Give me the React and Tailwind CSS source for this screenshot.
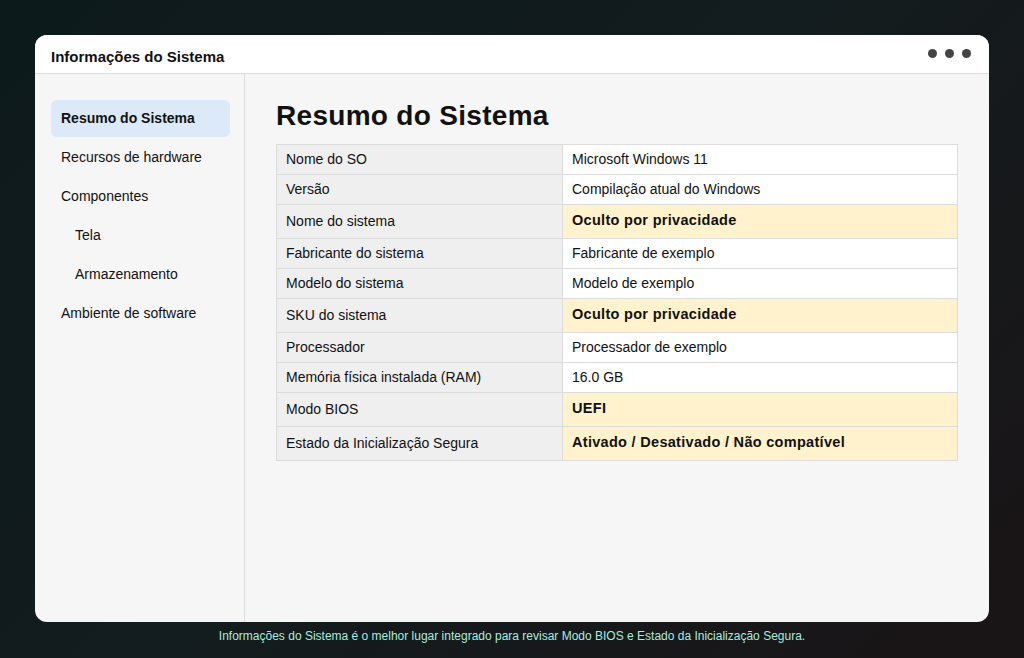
export default function App() {
  const rows = [
    ["Nome do SO", "Microsoft Windows 11"],
    ["Versão", "Compilação atual do Windows"],
    ["Nome do sistema", "Oculto por privacidade", true],
    ["Fabricante do sistema", "Fabricante de exemplo"],
    ["Modelo do sistema", "Modelo de exemplo"],
    ["SKU do sistema", "Oculto por privacidade", true],
    ["Processador", "Processador de exemplo"],
    ["Memória física instalada (RAM)", "16.0 GB"],
    ["Modo BIOS", "UEFI", true],
    ["Estado da Inicialização Segura", "Ativado / Desativado / Não compatível", true],
  ];
  const nav = [
    ["Resumo do Sistema", 0, true],
    ["Recursos de hardware", 0],
    ["Componentes", 0],
    ["Tela", 1],
    ["Armazenamento", 1],
    ["Ambiente de software", 0],
  ];
  return (
    <div className="w-[1024px] h-[658px] overflow-hidden bg-[linear-gradient(135deg,#0d1a1c,#131c1e_50%,#1a1416)] pt-[35px] px-[35px] font-[Liberation_Sans,Arial,sans-serif] text-[#111]">
      <div className="w-[954px] h-[587px] bg-[#f6f6f6] rounded-[12px] overflow-hidden flex flex-col">
        <div className="h-[39px] bg-white border-b border-[#dcdcdc] flex items-center justify-between pl-4 pr-[18px] shrink-0">
          <span className="font-bold text-[15px] pt-[6px]">Informações do Sistema</span>
          <div className="flex gap-[8px] pb-[2px]">
            <span className="w-[9px] h-[9px] rounded-full bg-[#444]" />
            <span className="w-[9px] h-[9px] rounded-full bg-[#444]" />
            <span className="w-[9px] h-[9px] rounded-full bg-[#444]" />
          </div>
        </div>
        <div className="flex flex-1">
          <div className="w-[210px] border-r border-[#dcdcdc] pt-[26px] pl-4 pr-[14px] flex flex-col gap-[2px]">
            {nav.map(([t, ind, act]) => (
              <div key={t} className={`h-[37px] flex items-center rounded-[6px] text-[14px] ${ind ? "pl-[24px]" : "pl-[10px]"} ${act ? "bg-[#dce9f9] font-bold" : ""}`}>{t}</div>
            ))}
          </div>
          <div className="flex-1 pl-[31px] pr-[31px] pt-[26px]">
            <h1 className="text-[28px] font-bold leading-[32px] mb-[12px] tracking-[0.3px]">Resumo do Sistema</h1>
            <table className="w-full border-collapse text-[14px]">
              <tbody>
                {rows.map(([k, v, hl]) => (
                  <tr key={k} className={hl ? "h-[34px]" : "h-[30px]"}>
                    <td className="w-[286px] bg-[#efefef] border border-[#dcdcdc] pl-[9px] pb-[1px]">{k}</td>
                    <td className={`border border-[#dcdcdc] pl-[9px] pb-[1px] ${hl ? "bg-[#fff2cc] font-bold text-[14.5px] tracking-[0.3px]" : "bg-white"}`}>{v}</td>
                  </tr>
                ))}
              </tbody>
            </table>
          </div>
        </div>
      </div>
      <div className="text-center text-[12px] text-[#a8ecdf] mt-[5px] ml-[-35px] w-[1024px]">Informações do Sistema é o melhor lugar integrado para revisar Modo BIOS e Estado da Inicialização Segura.</div>
    </div>
  );
}
